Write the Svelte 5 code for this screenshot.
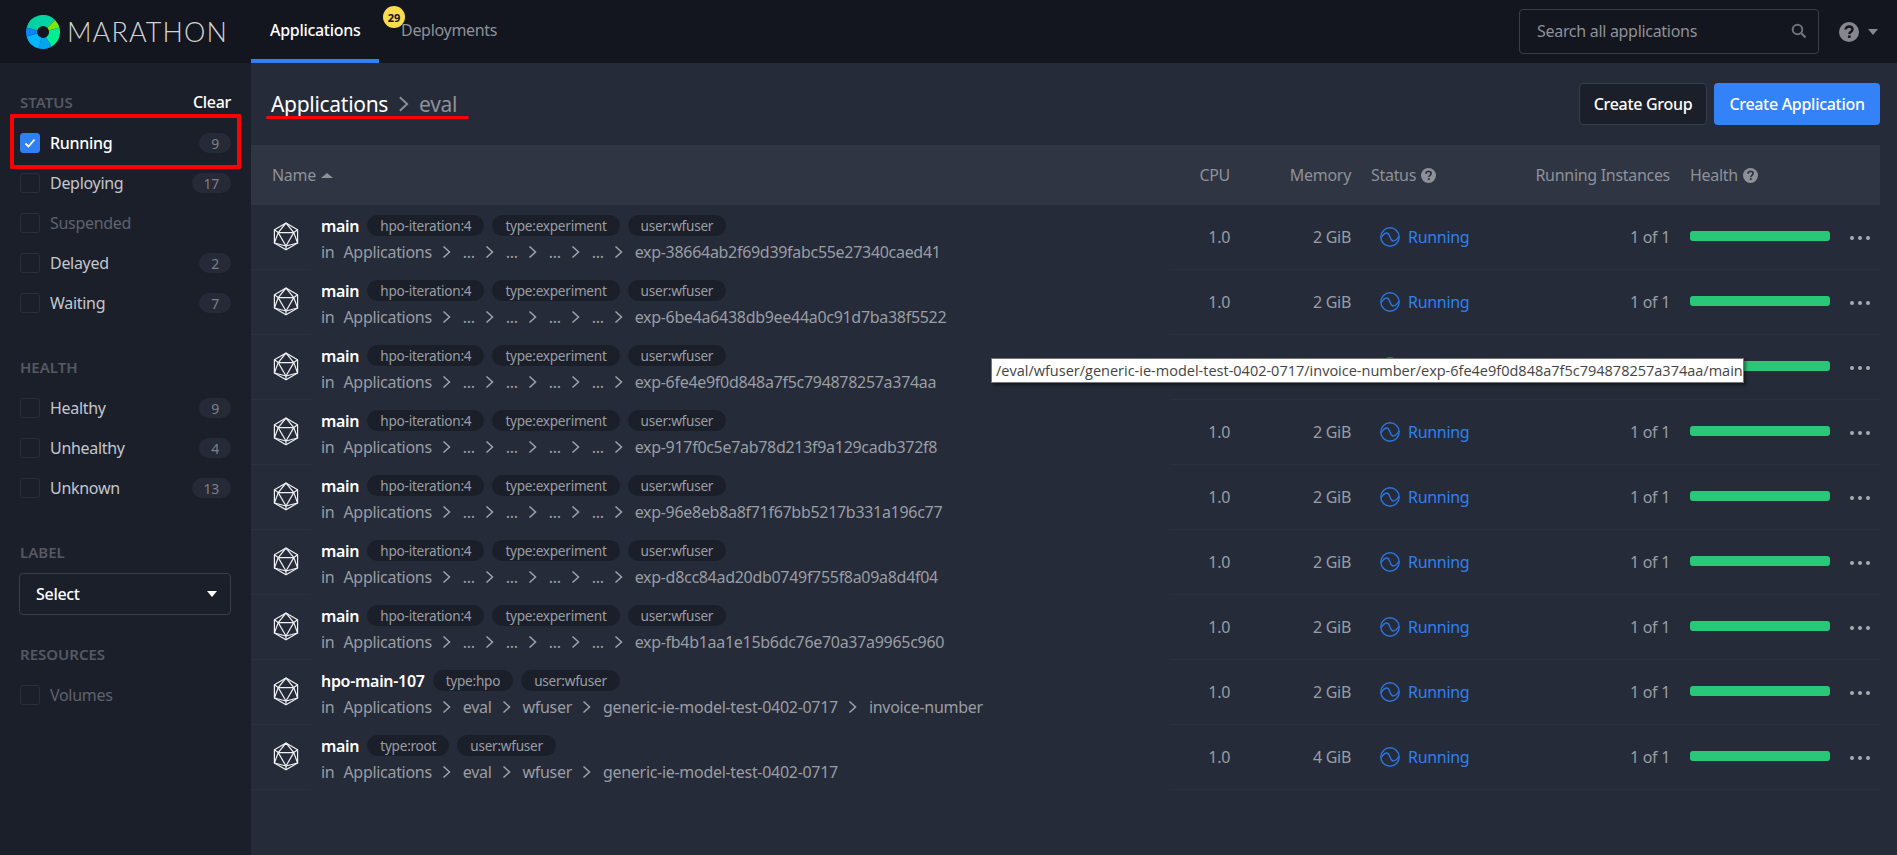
<script lang="ts">
  type Row = { name: string; tags: string[]; path: string[]; memory: string };

  const iter = ['hpo-iteration:4', 'type:experiment', 'user:wfuser'];
  const dots = ['...', '...', '...', '...'];
  const rows: Row[] = [
    { name: 'main', tags: iter, path: [...dots, 'exp-38664ab2f69d39fabc55e27340caed41'], memory: '2 GiB' },
    { name: 'main', tags: iter, path: [...dots, 'exp-6be4a6438db9ee44a0c91d7ba38f5522'], memory: '2 GiB' },
    { name: 'main', tags: iter, path: [...dots, 'exp-6fe4e9f0d848a7f5c794878257a374aa'], memory: '2 GiB' },
    { name: 'main', tags: iter, path: [...dots, 'exp-917f0c5e7ab78d213f9a129cadb372f8'], memory: '2 GiB' },
    { name: 'main', tags: iter, path: [...dots, 'exp-96e8eb8a8f71f67bb5217b331a196c77'], memory: '2 GiB' },
    { name: 'main', tags: iter, path: [...dots, 'exp-d8cc84ad20db0749f755f8a09a8d4f04'], memory: '2 GiB' },
    { name: 'main', tags: iter, path: [...dots, 'exp-fb4b1aa1e15b6dc76e70a37a9965c960'], memory: '2 GiB' },
    { name: 'hpo-main-107', tags: ['type:hpo', 'user:wfuser'], path: ['eval', 'wfuser', 'generic-ie-model-test-0402-0717', 'invoice-number'], memory: '2 GiB' },
    { name: 'main', tags: ['type:root', 'user:wfuser'], path: ['eval', 'wfuser', 'generic-ie-model-test-0402-0717'], memory: '4 GiB' },
  ];

  const status = [
    { label: 'Running', count: 9, checked: true },
    { label: 'Deploying', count: 17 },
    { label: 'Suspended', muted: true },
    { label: 'Delayed', count: 2 },
    { label: 'Waiting', count: 7 },
  ];
  const health = [
    { label: 'Healthy', count: 9 },
    { label: 'Unhealthy', count: 4 },
    { label: 'Unknown', count: 13 },
  ];

  // logo ring, angles in degrees clockwise from 12 o'clock
  const segments = [
    { from: -75, to: 45, color: '#00d3a3' },
    { from: 45, to: 75, color: '#7fe60a' },
    { from: 75, to: 150, color: '#00ef94' },
    { from: 150, to: 195, color: '#00a4f2' },
    { from: 195, to: 255, color: '#00b6ff' },
    { from: 255, to: 285, color: '#0a85fb' },
  ];
  function arc(from: number, to: number) {
    const r = 11.5;
    const p = (a: number) => {
      const t = ((a - 90) * Math.PI) / 180;
      return `${(17 + r * Math.cos(t)).toFixed(2)} ${(17 + r * Math.sin(t)).toFixed(2)}`;
    };
    return `M${p(from)} A${r} ${r} 0 ${to - from > 180 ? 1 : 0} 1 ${p(to)}`;
  }
</script>

{#snippet help(size: number)}
  <svg class="help" width={size} height={size} viewBox="0 0 20 20">
    <circle cx="10" cy="10" r="10" fill="currentColor" />
    <path d="M6.600 7.600c0-2 1.500-3.100 3.500-3.100s3.400 1.100 3.400 2.900c0 2.400-3.100 2.400-3.100 4.600" fill="none" stroke="var(--help-bg)" stroke-width="2.400" />
    <rect x="9.100" y="13.400" width="2.500" height="2.500" fill="var(--help-bg)" />
  </svg>
{/snippet}

{#snippet chevron()}
  <svg class="chev" width="9" height="14" viewBox="0 0 9 14"><path d="M1.500 1.500 7.500 7l-6 5.500" fill="none" stroke="currentColor" stroke-width="1.500" /></svg>
{/snippet}

<div class="page">
  <header class="top">
    <div class="brand">
      <svg width="34" height="34" viewBox="0 0 34 34">
        {#each segments as s}
          <path d={arc(s.from, s.to)} fill="none" stroke={s.color} stroke-width="11" />
        {/each}
      </svg>
      <span class="wordmark">MARATHON</span>
    </div>
    <nav>
      <a class="tab active" href="#apps">Applications</a>
      <a class="tab" href="#deployments"><span class="notif">29</span>Deployments</a>
    </nav>
    <div class="top-right">
      <div class="search">
        <span>Search all applications</span>
        <svg width="16" height="16" viewBox="0 0 16 16"><circle cx="6.500" cy="6.500" r="4.800" fill="none" stroke="#6e7178" stroke-width="2" /><path d="m10.200 10.200 4.300 4.300" stroke="#6e7178" stroke-width="2.400" /></svg>
      </div>
      <span class="help-top">{@render help(20)}</span>
      <span class="caret grey"></span>
    </div>
  </header>

  <div class="body">
    <aside>
      <div class="side-head"><h3>STATUS</h3><span class="clear">Clear</span></div>
      {#each status as item}
        <div class="check" class:muted={item.muted}>
          <span class="box" class:on={item.checked}>
            {#if item.checked}
              <svg width="14" height="14" viewBox="0 0 14 14"><path d="m2.500 7.500 3 3 6-7" fill="none" stroke="#fff" stroke-width="1.800" /></svg>
            {/if}
          </span>
          <span class="lbl" class:sel={item.checked}>{item.label}</span>
          {#if item.count}<span class="count">{item.count}</span>{/if}
        </div>
      {/each}

      <div class="side-head gap"><h3>HEALTH</h3></div>
      {#each health as item}
        <div class="check">
          <span class="box"></span>
          <span class="lbl">{item.label}</span>
          <span class="count">{item.count}</span>
        </div>
      {/each}

      <div class="side-head gap"><h3>LABEL</h3></div>
      <div class="select"><span>Select</span><span class="caret white"></span></div>

      <div class="side-head res"><h3>RESOURCES</h3></div>
      <div class="check muted">
        <span class="box"></span>
        <span class="lbl">Volumes</span>
      </div>
    </aside>

    <main>
      <div class="title-bar">
        <h1>Applications {@render chevron()} <span class="crumb">eval</span></h1>
        <div class="actions">
          <button class="ghost">Create Group</button>
          <button class="primary">Create Application</button>
        </div>
      </div>

      <div class="table">
        <div class="row head">
          <div class="th-name">Name <span class="sort"></span></div>
          <div class="num">CPU</div>
          <div class="num">Memory</div>
          <div class="th-status">Status {@render help(15)}</div>
          <div class="num">Running Instances</div>
          <div class="th-health">Health {@render help(15)}</div>
        </div>

        {#each rows as r}
          <div class="row">
            <div class="cell ico">
              <svg width="26" height="29" viewBox="0 0 26 29" fill="none" stroke="#f0f1f3" stroke-width="1.200" stroke-linejoin="round">
                <path d="M13 1 24.600 7.800V21L13 27.800 1.400 21V7.800Z" />
                <path d="M5.200 10.600H20.800L13 24Z" />
                <path d="M13 1 5.200 10.600 1.400 21 13 24 24.600 21 20.800 10.600 13 1M1.400 7.800 5.200 10.600M24.600 7.800 20.800 10.600M13 24V27.800" />
              </svg>
            </div>
            <div class="name">
              <div class="line">
                <strong>{r.name}</strong>
                {#each r.tags as t}<span class="tag">{t}</span>{/each}
              </div>
              <div class="line sub">
                <span>in</span>
                <span class="crumb-first">Applications</span>
                {#each r.path as p}{@render chevron()}<span>{p}</span>{/each}
              </div>
            </div>
            <div class="cell num">1.0</div>
            <div class="cell num">{r.memory}</div>
            <div class="cell state">
              <svg width="20" height="20" viewBox="0 0 20 20" fill="none" stroke="#2d74da" stroke-width="1.400">
                <circle cx="10" cy="10" r="9.200" />
                <path d="M1 11C3 7.500 5 6 7 6 10 6 10 14 13 14 15 14 17 12.500 19 9" />
              </svg>
              Running
            </div>
            <div class="cell num">1 of 1</div>
            <div class="cell bar-cell">
              <span class="bar"></span>
              <span class="more"><i></i><i></i><i></i></span>
            </div>
          </div>
        {/each}
      </div>
    </main>
  </div>

  <!-- annotations drawn over the screenshot -->
  <div class="mark-box"></div>
  <div class="mark-line"></div>
  <div class="tooltip">/eval/wfuser/generic-ie-model-test-0402-0717/invoice-number/exp-6fe4e9f0d848a7f5c794878257a374aa/main</div>
</div>

<style>
  :global(body) { margin: 0; background: #252b38; }
  .page {
    position: relative;
    width: 1897px; height: 855px; overflow: hidden;
    font-family: "Noto Sans", sans-serif;
    font-size: 16px;
    letter-spacing: -0.3px;
    color: #9a9da4;
    --help-bg: #252b38;
  }

  .top {
    height: 63px; box-sizing: border-box;
    display: flex; align-items: stretch;
    background: #13161f;
  }
  .brand { width: 251px; display: flex; align-items: center; padding-left: 26px; box-sizing: border-box; gap: 7px; }
  .wordmark {
    font-family: Lato, sans-serif; font-weight: 300;
    font-size: 27px; letter-spacing: 1.100px; color: #d2d3d5;
  }
  nav { display: flex; }
  .tab {
    position: relative;
    display: flex; align-items: center;
    color: #8e9198; text-decoration: none;
    padding: 0 19px;
    border-bottom: 4px solid transparent;
  }
  .tab.active { color: #fff; border-bottom-color: #2f80f2; width: 128px; box-sizing: border-box; font-weight: 500; }
  .tab + .tab { padding-left: 22px; }
  .notif {
    position: absolute; left: 4px; top: 6px;
    width: 22px; height: 22px; border-radius: 50%;
    background: #fbdc4b; color: #13161f;
    font-size: 11px; font-weight: 700; letter-spacing: 0;
    display: flex; align-items: center; justify-content: center;
  }
  .top-right { margin-left: auto; display: flex; align-items: center; padding-right: 19px; }
  .search {
    width: 300px; height: 45px; box-sizing: border-box;
    border: 1px solid #3a3e4b; border-radius: 4px;
    display: flex; align-items: center; justify-content: space-between;
    padding: 0 11px 1px 17px; color: #8e9198;
  }
  .help-top { margin-left: 20px; color: #85878d; display: flex; --help-bg: #13161f; }
  .caret { width: 0; height: 0; border: 5.500px solid transparent; border-bottom: 0; border-top-width: 6px; }
  .caret.grey { border-top-color: #85878d; margin-left: 9px; }
  .caret.white { border-top-color: #fff; }

  .body { display: flex; height: 792px; }
  aside {
    width: 251px; box-sizing: border-box;
    background: #1b1f2a; padding: 28px 20px 0;
  }
  .side-head { display: flex; justify-content: space-between; align-items: center; height: 22px; margin-bottom: 10px; }
  .side-head.gap { margin-top: 33px; }
  .side-head.res { margin-top: 28px; }
  h3 { margin: 0; font-size: 15px; font-weight: 600; color: #555962; letter-spacing: 0; }
  .clear { color: #fff; font-weight: 500; }
  .check { height: 40px; display: flex; align-items: center; color: #c4c7ce; }
  .check.muted { color: #5f636c; }
  .box {
    width: 20px; height: 20px; box-sizing: border-box; flex: none;
    border: 1px solid #2a2e3a; border-radius: 3px; margin-right: 10px;
    display: flex; align-items: center; justify-content: center;
  }
  .box.on { background: #2f80f2; border-color: #2f80f2; }
  .lbl.sel { color: #fff; font-weight: 500; }
  .count {
    margin-left: auto; min-width: 32px; height: 20px; box-sizing: border-box;
    padding: 0 12px; border-radius: 10px;
    background: #252a36; color: #7d8088; font-size: 14px;
    display: flex; align-items: center; justify-content: center;
  }
  .select {
    height: 42px; box-sizing: border-box; margin-left: -1px; width: 212px;
    border: 1px solid #3a3e4b; border-radius: 4px;
    padding: 0 13px 0 16px; color: #fff; font-weight: 500;
    display: flex; align-items: center; justify-content: space-between;
  }

  main { flex: 1; padding-right: 17px; }
  .title-bar { height: 82px; display: flex; align-items: center; justify-content: space-between; padding-left: 20px; }
  h1 { margin: 0; font-size: 21px; font-weight: 400; color: #fff; display: flex; align-items: center; gap: 10px; }
  h1 .chev { width: 11px; height: 18px; color: #8e9198; }
  .crumb { color: #8e9198; }
  .actions { display: flex; gap: 7px; }
  button {
    height: 42px; box-sizing: border-box; border-radius: 4px;
    font: inherit; font-weight: 500; color: #fff; cursor: pointer;
    letter-spacing: inherit; padding: 0;
  }
  .ghost { width: 128px; background: #1b1f2a; border: 1px solid #3a3e4b; }
  .primary { width: 166px; background: #3382f7; border: none; }

  .row {
    display: grid;
    grid-template-columns: 60px 859px 60px 121px 180px 139px 210px;
    height: 65px;
  }
  .row.head { height: 60px; background: #2f3543; align-items: center; color: #8e9198; --help-bg: #2f3543; }
  .th-name { grid-column: 1 / 3; padding-left: 21px; display: flex; align-items: center; gap: 5px; }
  .sort { width: 0; height: 0; border: 6px solid transparent; border-top: 0; border-bottom: 5px solid #8e9198; margin-top: 1px; }
  .th-status, .th-health { padding-left: 20px; display: flex; align-items: center; gap: 5px; }
  .num { text-align: right; }
  .cell { border-bottom: 1px solid #2a303e; display: flex; align-items: center; padding-bottom: 1px; box-sizing: border-box; }
  .cell.num { justify-content: flex-end; }
  .ico { padding-left: 22px; }
  .name { margin-left: 10px; padding-top: 10px; box-sizing: border-box; min-width: 0; }
  .line { display: flex; align-items: center; height: 21px; white-space: nowrap; }
  .line strong { color: #fff; font-weight: 600; margin-right: 8px; }
  .tag {
    height: 21px; box-sizing: border-box; padding: 0 13px; margin-right: 8px;
    border-radius: 11px; background: #1b1f2a; font-size: 13.600px; letter-spacing: -0.25px;
    display: flex; align-items: center;
  }
  .sub { margin-top: 5px; }
  .sub .crumb-first { margin-left: 9px; }
  .sub .chev { margin: 0 12px 0 10px; color: #a0a3aa; }
  .state { padding-left: 29px; color: #2f80f2; gap: 8px; }
  .state svg { margin-top: 1px; }
  .bar-cell { padding-left: 20px; }
  .bar { width: 140px; height: 10px; border-radius: 3px; background: #28c878; margin-bottom: 2px; }
  .more { display: flex; gap: 4px; margin-left: 20px; margin-top: 2px; }
  .more i { width: 4px; height: 4px; border-radius: 50%; background: #a9acb2; }

  .mark-box {
    position: absolute; left: 10px; top: 114px; width: 223px; height: 47px;
    border: 4px solid #f00; border-radius: 1px;
  }
  .mark-line {
    position: absolute; left: 266px; top: 116px; width: 203px; height: 3px;
    background: #f00; border-radius: 2px;
  }
  .tooltip {
    position: absolute; left: 991px; top: 358px; width: 753px; height: 25px; box-sizing: border-box;
    background: #fff; border: 1px solid #767676; color: #444;
    box-shadow: 2px 2px 3px rgba(0, 0, 0, 0.45);
    font-family: "Open Sans", sans-serif; font-size: 14.500px; letter-spacing: 0;
    padding: 0 4px; line-height: 23px; white-space: nowrap;
  }
</style>
